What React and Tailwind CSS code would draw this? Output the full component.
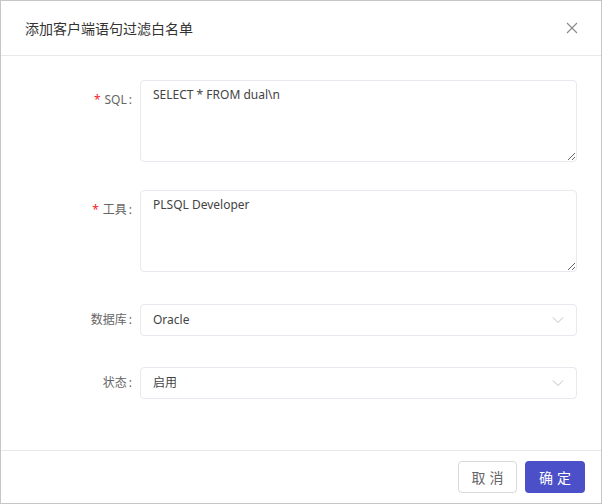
export default function App() {
  const font = { fontFamily: '"Noto Sans", "Noto Sans CJK SC", sans-serif' };

  return (
    <div
      className="w-[602px] h-[504px] bg-white border border-[#c6c6c6] flex flex-col text-[#333]"
      style={font}
    >
      {/* Header */}
      <div className="h-[55px] shrink-0 flex items-center justify-between pl-6 pr-[22px] border-b border-[#e8e8e8]">
        <h2 className="text-[14px] text-[#333] font-normal">添加客户端语句过滤白名单</h2>
        <button className="w-[14px] h-[14px] flex items-center justify-center">
          <svg width="12" height="12" viewBox="0 0 12 12" fill="none" stroke="#8c8c8c" strokeWidth="1.2">
            <path d="M1 1 L11 11 M11 1 L1 11" />
          </svg>
        </button>
      </div>

      {/* Body */}
      <div className="flex-1 pt-6 pr-6">
        <div className="flex">
          <Label required text="SQL" textarea />
          <textarea
            readOnly
            defaultValue={'SELECT * FROM dual\\n'}
            className="flex-1 h-[82px] border border-[#e8e8ee] rounded-[4px] px-3 pt-[5px] text-[12px] leading-[18px] text-[#444] outline-none"
          />
        </div>

        <div className="flex mt-[28px]">
          <Label required text="工具" textarea />
          <textarea
            readOnly
            defaultValue="PLSQL Developer"
            className="flex-1 h-[82px] border border-[#e8e8ee] rounded-[4px] px-3 pt-[5px] text-[12px] leading-[18px] text-[#444] outline-none"
          />
        </div>

        <div className="flex mt-[32px]">
          <Label text="数据库" />
          <Select value="Oracle" />
        </div>

        <div className="flex mt-[31px]">
          <Label text="状态" />
          <Select value="启用" />
        </div>
      </div>

      {/* Footer */}
      <div className="shrink-0 border-t border-[#e8e8e8] flex justify-end gap-2 pr-4 pt-[10px] pb-[10px]">
        <button className="w-[59px] h-[32px] border border-[#d9d9d9] rounded-[4px] text-[14px] text-[#666] tracking-[4px] pl-[4px] bg-white">
          取消
        </button>
        <button className="w-[60px] h-[32px] rounded-[4px] bg-[#4b50c8] text-white text-[14px] tracking-[4px] pl-[4px]">
          确定
        </button>
      </div>
    </div>
  );
}

function Label({ text, required, textarea }) {
  return (
    <div
      className={`w-[139px] shrink-0 flex justify-end items-center h-[32px] pr-[8px] text-[12px] text-[#666] ${
        textarea ? 'mt-[4px]' : ''
      }`}
    >
      {required && <span className="text-[#f5222d] mr-[4px] text-[12px]">*</span>}
      <span>{text}</span>
      <span className="ml-[2px]">:</span>
    </div>
  );
}

function Select({ value }) {
  return (
    <div className="flex-1 h-[32px] border border-[#e8e8ee] rounded-[4px] flex items-center justify-between pl-3 pr-[12px] text-[12px] text-[#444]">
      <span>{value}</span>
      <svg width="12" height="8" viewBox="0 0 12 8" fill="none" stroke="#c0c0c0" strokeWidth="1">
        <path d="M1 1.5 L6 6.5 L11 1.5" />
      </svg>
    </div>
  );
}
